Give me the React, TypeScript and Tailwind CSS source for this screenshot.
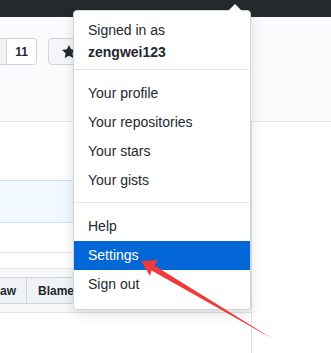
const font = { fontFamily: '"Liberation Sans", Arial, sans-serif' };

const menuGroups = [
  ["Your profile", "Your repositories", "Your stars", "Your gists"],
  ["Help", "Settings", "Sign out"],
];

function UserMenu() {
  return (
    <div className="absolute left-[73px] top-[10px] w-[178px] rounded bg-white border border-[#d1d5da] shadow-[0_3px_12px_rgba(27,31,35,0.15)] pb-[3px]">
      {/* caret */}
      <div className="absolute -top-[7px] left-[154px] w-0 h-0 border-x-[7px] border-x-transparent border-b-[7px] border-b-white" />
      <div className="px-[14px] pt-[8px] pb-[6px] text-[14px] leading-[22px] text-[#24292e]">
        <div>Signed in as</div>
        <div className="font-semibold">zengwei123</div>
      </div>
      {menuGroups.map((group, gi) => (
        <div key={gi}>
          <div className="h-px bg-[#e1e4e8]" />
          <div className="pt-[9px] pb-[7px]">
            {group.map((item) => (
              <div
                key={item}
                className={
                  item === "Settings"
                    ? "h-[29px] px-[14px] flex items-center text-[14px] bg-[#0366d6] text-white"
                    : "h-[29px] px-[14px] flex items-center text-[14px] text-[#24292e]"
                }
              >
                {item}
              </div>
            ))}
          </div>
        </div>
      ))}
    </div>
  );
}

function StarIcon() {
  return (
    <svg width="14" height="16" viewBox="0 0 14 16" fill="#24292e">
      <path d="M14 6l-4.9-.64L7 1 4.9 5.36 0 6l3.6 3.26L2.67 14 7 11.67 11.33 14l-.93-4.74L14 6z" />
    </svg>
  );
}

export default function App() {
  return (
    <div className="relative w-[331px] h-[353px] overflow-hidden bg-white" style={font}>
      <div className="h-[17px] bg-[#24292e]" />
      <div className="h-[105px] bg-[#fafbfc] border-b border-[#e1e4e8] pt-[21px]">
        <div className="flex ml-[-40px] text-[12px] font-bold text-[#24292e]">
          <div className="w-[47px] h-[27px] bg-[#eff3f6] border border-[#d1d5da] rounded-l" />
          <div className="w-[30px] h-[27px] bg-white border border-l-0 border-[#d1d5da] rounded-r flex items-center justify-center">
            11
          </div>
          <div className="ml-[11px] w-[120px] h-[27px] bg-[#f4f6f8] border border-[#d1d5da] rounded flex items-center pl-[13px] gap-1">
            <StarIcon />
            Star
          </div>
        </div>
      </div>
      <div className="ml-[-20px] w-[272px] h-[231px] border-r border-[#e1e4e8]">
        <div className="h-[58px]" />
        <div className="h-[43px] bg-[#f1f8ff] border-y border-[#c8e1ff]" />
        <div className="h-[30px] border-b border-[#dbe4ef]" />
        <div className="h-[15px]" />
        <div className="h-[45px] bg-[#f6f8fa] border-y border-[#e1e4e8] flex items-center pl-[3px]">
          <div className="flex text-[12px] font-semibold text-[#24292e]">
            <div className="w-[44px] h-[27px] bg-[#eff3f6] border border-[#d1d5da] rounded-l flex items-center justify-end pr-[10px]">
              Raw
            </div>
            <div className="w-[52px] h-[27px] bg-[#eff3f6] border border-l-0 border-[#d1d5da] flex items-center pl-[11px]">
              Blame
            </div>
          </div>
        </div>
      </div>
      <UserMenu />
      <svg className="absolute left-0 top-0 pointer-events-none" width="331" height="353">
        <polygon
          points="141,261 158,260 154.5,265.5 273,339 151.5,270.5 150,276"
          fill="#f03a3a"
        />
      </svg>
    </div>
  );
}
